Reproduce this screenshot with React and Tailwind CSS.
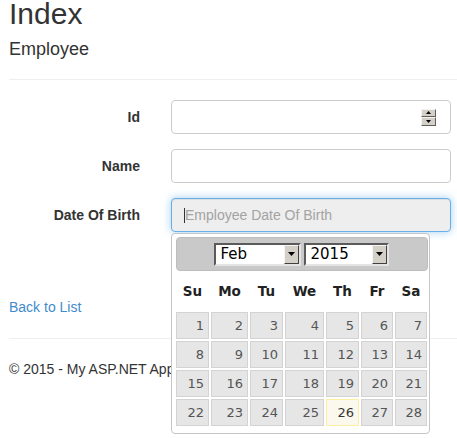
import React from "react";

const cols = "grid grid-cols-[33px_37px_33px_39px_33px_32px_32px] gap-x-[2px]";
const dayNames = ["Su", "Mo", "Tu", "We", "Th", "Fr", "Sa"];
const days = Array.from({ length: 28 }, (_, i) => i + 1);

function Arrow({ up }) {
  return (
    <svg width="7" height="4" viewBox="0 0 7 4" className="block">
      {up ? <path d="M0 4 L3.5 0 L7 4 Z" fill="#000" /> : <path d="M0 0 L7 0 L3.5 4 Z" fill="#000" />}
    </svg>
  );
}

function ClassicSelect({ value, width }) {
  return (
    <div
      className={`${width} h-[23px] flex bg-white border-2 border-t-[#5a5a5a] border-l-[#5a5a5a] border-r-[#e4e4e4] border-b-[#e4e4e4]`}
    >
      <span className="flex-1 pl-[5px] text-[15px] leading-[19px] text-black">{value}</span>
      <span className="w-[15px] h-full flex items-center justify-center bg-[#d4d0c8] border border-t-[#f4f4f4] border-l-[#f4f4f4] border-r-[#404040] border-b-[#404040]">
        <Arrow />
      </span>
    </div>
  );
}

function Spinner() {
  return (
    <div className="flex flex-col w-[15px]">
      <span className="h-[8.5px] flex items-center justify-center bg-[#d4d0c8] border border-t-[#f4f4f4] border-l-[#f4f4f4] border-r-[#606060] border-b-[#606060]">
        <svg width="5" height="3" viewBox="0 0 5 3" className="block"><path d="M0 3 L2.5 0 L5 3 Z" fill="#000" /></svg>
      </span>
      <span className="h-[8.5px] flex items-center justify-center bg-[#d4d0c8] border border-t-[#f4f4f4] border-l-[#f4f4f4] border-r-[#606060] border-b-[#606060]">
        <svg width="5" height="3" viewBox="0 0 5 3" className="block"><path d="M0 0 L5 0 L2.5 3 Z" fill="#000" /></svg>
      </span>
    </div>
  );
}

function Row({ label, children }) {
  return (
    <div className="flex">
      <label className="w-[131px] text-right font-bold pt-[7px]">{label}</label>
      <div className="ml-[31px]">{children}</div>
    </div>
  );
}

export default function App() {
  return (
    <div className="relative w-[457px] h-[438px] overflow-hidden bg-white font-['Liberation_Sans',Arial,sans-serif] text-[14px] leading-[20px] text-[#333]">
      <div className="pl-[9px]">
        <h1 className="text-[30px] leading-[28px] font-normal">Index</h1>
        <h4 className="mt-[11px] text-[18px] leading-[20px]">Employee</h4>
        <div className="mt-[20px] h-px bg-[#eeeeee]" />

        <div className="mt-[20px] flex flex-col gap-[15px]">
          <Row label="Id">
            <div className="w-[280px] h-[34px] border border-[#cccccc] rounded-[4px] bg-white flex items-center justify-end pr-[14px]">
              <Spinner />
            </div>
          </Row>
          <Row label="Name">
            <div className="w-[280px] h-[34px] border border-[#cccccc] rounded-[4px] bg-white" />
          </Row>
          <Row label="Date Of Birth">
            <div className="w-[280px] h-[34px] border border-[#66afe9] rounded-[4px] bg-[#eeeeee] shadow-[inset_0_1px_1px_rgba(0,0,0,0.075),0_0_8px_rgba(102,175,233,0.6)] flex items-center pl-[12px]">
              <span className="w-px h-[15px] bg-[#333]" />
              <span className="text-[#a3a3a3]">Employee Date Of Birth</span>
            </div>
          </Row>
        </div>

        <a className="block mt-[65px] text-[#428bca] w-fit">Back to List</a>
        <div className="mt-[21px] h-px bg-[#eeeeee]" />
        <p className="mt-[20px] whitespace-nowrap">© 2015 - My ASP.NET Application</p>
      </div>

      {/* datepicker popup */}
      <div className="absolute left-[171px] top-[233px] w-[259px] h-[201px] bg-white border border-[#c5c5c5] rounded-[4px] pl-[4px] pr-[1px] pt-[3px] font-['DejaVu_Sans',Verdana,sans-serif]">
        <div className="h-[34px] bg-[#c9c9c9] border border-[#bdbdbd] rounded-[4px] flex items-center justify-center gap-[3px] pr-[2px]">
          <ClassicSelect value="Feb" width="w-[87px]" />
          <ClassicSelect value="2015" width="w-[85px]" />
        </div>
        <div className={`${cols} w-[251px] h-[40px] items-center text-center font-bold text-[13.5px] text-[#222]`}>
          {dayNames.map((d) => (
            <span key={d}>{d}</span>
          ))}
        </div>
        <div className={`${cols} w-[251px] gap-y-[2px] mt-[1px]`}>
          {days.map((d) => (
            <span
              key={d}
              className={
                d === 26
                  ? "h-[27px] border border-[#fcefa1] bg-[#fbf9ee] text-[#363636] text-right pr-[4px] text-[13px] leading-[25px]"
                  : "h-[27px] border border-[#d3d3d3] bg-[#e6e6e6] text-[#555] text-right pr-[4px] text-[13px] leading-[25px]"
              }
            >
              {d}
            </span>
          ))}
        </div>
      </div>
    </div>
  );
}
